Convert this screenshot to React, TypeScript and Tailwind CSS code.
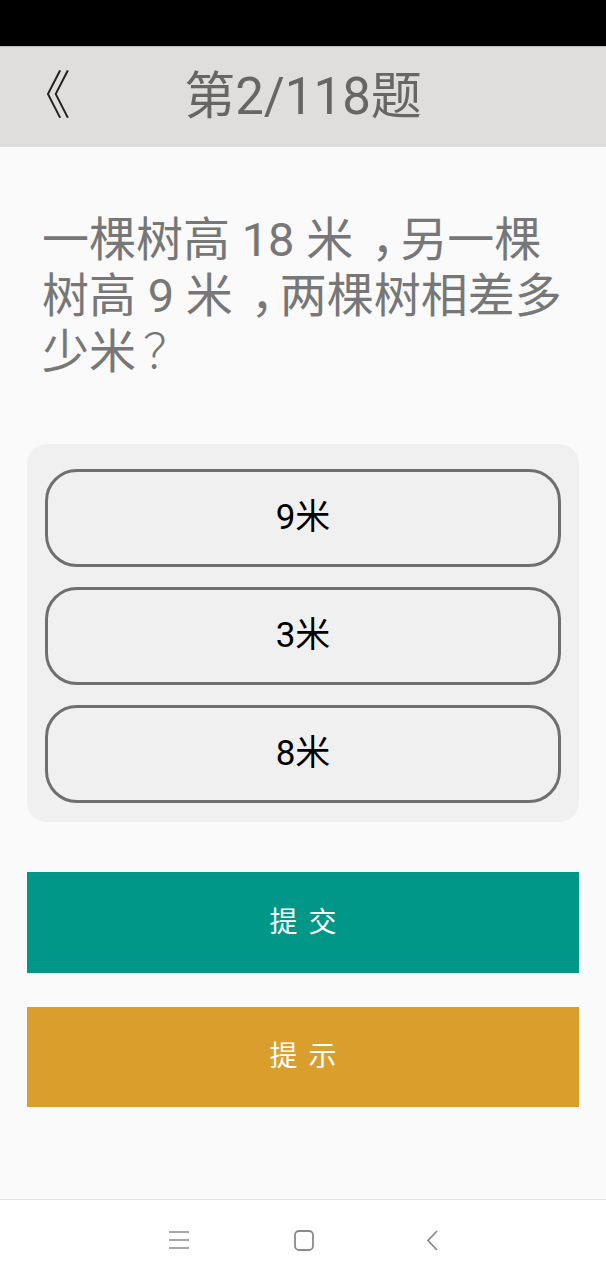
const font = "font-['Roboto','Noto_Sans_CJK_SC',sans-serif]"

// full-width punctuation drawn nearer the middle of its box, as the device font does
function Comma() {
  return <span className="pl-[18px] tracking-[-18px]">，</span>
}

function Option({ label }: { label: string }) {
  return (
    <button className="h-[98px] w-full rounded-[32px] border-[3px] border-[#6f6f6f] bg-[#f0f0f0] text-[35px] text-black">
      {label}
    </button>
  )
}

export default function App() {
  return (
    <div className={`flex h-[1280px] w-[606px] flex-col bg-[#fafafa] ${font}`}>
      <div className="h-[46px] bg-black" />

      <header className="relative flex h-[101px] items-center justify-center border-t border-[#bdbdbd] bg-[#dfdedd]">
        <span className="absolute left-[19px] top-[24px] text-[52px] font-light leading-none text-[#222]">《</span>
        <h1 className="text-[51px] font-normal text-[#666]">第2/118题</h1>
      </header>

      <main className="flex flex-1 flex-col px-[27px]">
        <p className="mt-[65px] px-[15px] text-[47px] leading-[56px] text-[#777]">
          一棵树高 18 米<Comma />另一棵
          <br />
          树高 9 米<Comma />两棵树相差多
          <br />
          少米<span className="pl-[7px] font-light tracking-[-7px]">？</span>
        </p>

        <div className="mt-[64px] flex flex-col gap-[20px] rounded-[20px] bg-[#f0f0f0] px-[18px] pb-[19px] pt-[25px]">
          <Option label="9米" />
          <Option label="3米" />
          <Option label="8米" />
        </div>

        <button className="mt-[50px] h-[101px] w-full bg-[#009688] pl-[2px] text-[28px] tracking-[2px] text-white">
          提 交
        </button>
        <button className="mt-[34px] h-[100px] w-full bg-[#d99e2b] pl-[2px] text-[28px] tracking-[2px] text-white">
          提 示
        </button>
      </main>

      <nav className="flex h-[81px] items-center justify-center border-t border-[#e3e3e3] bg-white pl-[1px]">
        <svg width="20" height="18" viewBox="0 0 20 18" className="text-[#8a8a8a]">
          <path d="M0 1h20M0 9h20M0 17h20" stroke="currentColor" strokeWidth="1.6" fill="none" />
        </svg>
        <svg width="20" height="21" viewBox="0 0 20 21" className="ml-[105px] text-[#8a8a8a]">
          <rect x="1" y="1" width="18" height="19" rx="4" stroke="currentColor" strokeWidth="1.8" fill="none" />
        </svg>
        <svg width="12" height="21" viewBox="0 0 12 21" className="ml-[112px] text-[#8a8a8a]">
          <path d="M11 1 2 10.5l9 9.5" stroke="currentColor" strokeWidth="1.8" fill="none" />
        </svg>
      </nav>
    </div>
  )
}
